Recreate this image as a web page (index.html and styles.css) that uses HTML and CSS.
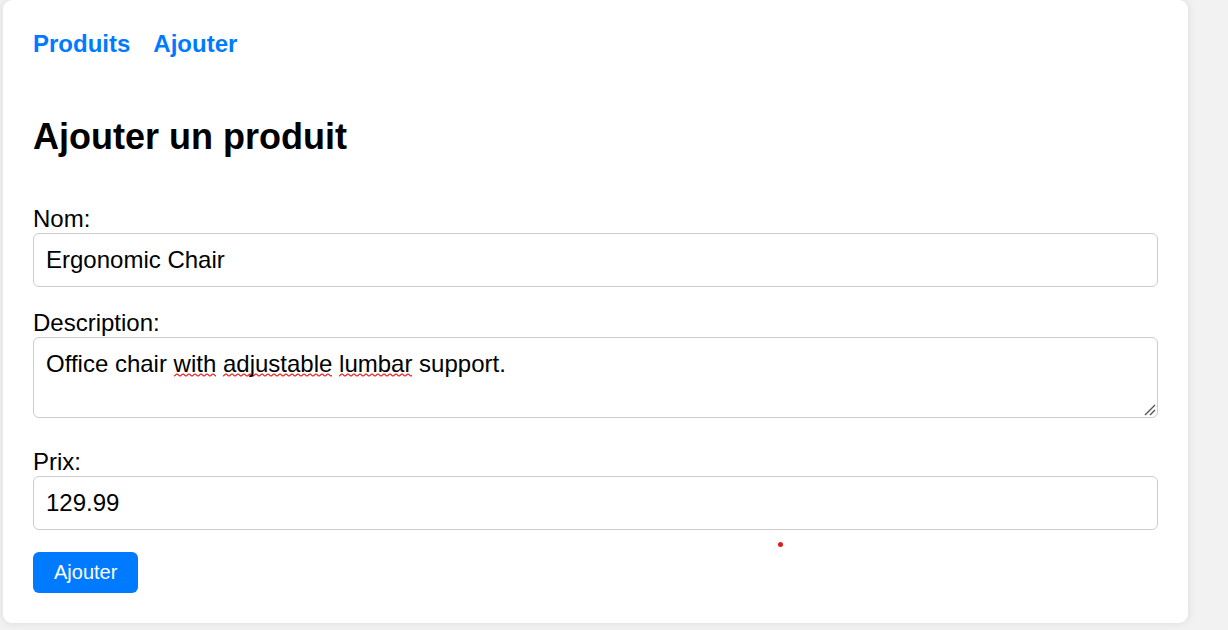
FILE: index.html
```html
<!DOCTYPE html>
<html lang="fr">
<head>
<meta charset="utf-8">
<title>Ajouter un produit</title>
<link rel="stylesheet" href="styles.css">
</head>
<body>
<div class="card">
  <nav class="nav">
    <a href="#" class="nav-link">Produits</a>
    <a href="#" class="nav-link">Ajouter</a>
  </nav>
  <h2 class="title">Ajouter un produit</h2>
  <form class="form">
    <div class="group">
      <label class="label" for="nom">Nom:</label>
      <input class="field" id="nom" type="text" value="Ergonomic Chair">
    </div>
    <div class="group group-area">
      <label class="label">Description:</label>
      <div class="field area" role="textbox" contenteditable="true">Office chair <span class="typo">with</span> <span class="typo">adjustable</span> <span class="typo">lumbar</span> support.</div>
      <svg class="grip" width="12" height="12" viewBox="0 0 12 12"><path d="M1 11 L11 1 M6 11 L11 6" stroke="#555" stroke-width="1.4" fill="none"/></svg>
    </div>
    <div class="group">
      <label class="label" for="prix">Prix:</label>
      <input class="field" id="prix" type="text" value="129.99">
    </div>
    <button type="button" class="btn">Ajouter</button>
  </form>
  <span class="dot"></span>
</div>
</body>
</html>
```
FILE: styles.css
```css
html, body {
  margin: 0;
  padding: 0;
}
body {
  background: #f2f2f2;
  font-family: "Liberation Sans", Arial, sans-serif;
  color: #000;
  height: 630px;
  overflow: hidden;
}
.card {
  position: relative;
  box-sizing: border-box;
  width: 1185px;
  margin-left: 3px;
  padding: 30px;
  background: #fff;
  border-radius: 9px;
  box-shadow: 0 0 10px rgba(0, 0, 0, 0.1);
}
.nav {
  display: flex;
  gap: 23px;
  margin-bottom: 58px;
}
.nav-link {
  color: #007bff;
  font-weight: bold;
  font-size: 24px;
  text-decoration: none;
}
.title {
  margin: 0 0 47px;
  font-size: 36px;
  font-weight: bold;
}
.form {
  display: flex;
  flex-direction: column;
}
.group {
  position: relative;
  margin-bottom: 22px;
}
.group-area {
  margin-bottom: 30px;
}
.label {
  display: block;
  font-size: 24px;
}
.field {
  display: block;
  box-sizing: border-box;
  width: 100%;
  height: 54px;
  padding: 0 12px;
  border: 1px solid #ccc;
  border-radius: 6px;
  font-family: "Liberation Sans", Arial, sans-serif;
  font-size: 24px;
  color: #000;
  background: #fff;
  outline: none;
}
.area {
  height: 81px;
  padding: 12px;
  line-height: 27.6px;
}
.typo {
  background-image: url("data:image/svg+xml,%3Csvg xmlns='http://www.w3.org/2000/svg' width='6' height='4'%3E%3Cpath d='M0 3 C1.5 3 1.5 1 3 1 C4.5 1 4.5 3 6 3' stroke='%23e00' stroke-width='1.1' fill='none'/%3E%3C/svg%3E");
  background-repeat: repeat-x;
  background-position: left bottom;
  background-size: 6px 4px;
}
.grip {
  position: absolute;
  right: 2px;
  bottom: 2px;
}
.btn {
  align-self: flex-start;
  box-sizing: border-box;
  height: 41px;
  padding: 0 21px;
  border: none;
  border-radius: 6px;
  background: #007bff;
  color: #fff;
  font-family: "Liberation Sans", Arial, sans-serif;
  font-size: 20px;
}
.dot {
  position: absolute;
  left: 775px;
  top: 542px;
  width: 5px;
  height: 5px;
  border-radius: 50%;
  background: #e41b1b;
}
```
